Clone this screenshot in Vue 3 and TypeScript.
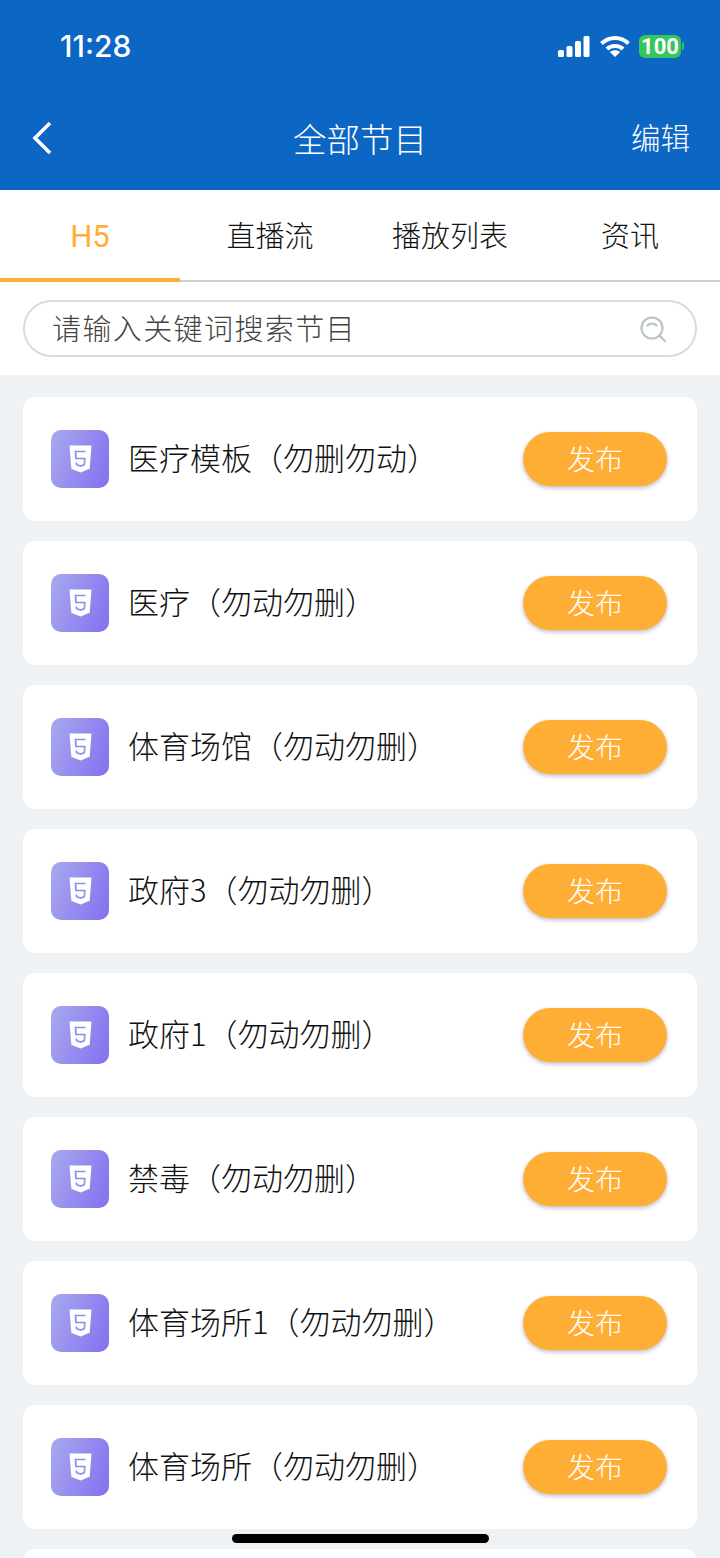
<script setup lang="ts">
const tabs = ['H5', '直播流', '播放列表', '资讯']

const programs = [
  '医疗模板（勿删勿动）',
  '医疗（勿动勿删）',
  '体育场馆（勿动勿删）',
  '政府3（勿动勿删）',
  '政府1（勿动勿删）',
  '禁毒（勿动勿删）',
  '体育场所1（勿动勿删）',
  '体育场所（勿动勿删）',
]
</script>

<template>
  <main class="page">
    <header class="top">
      <div class="status">
        <span class="status__time">11:28</span>
        <div class="status__icons">
          <svg class="status__bars" width="32" height="21" viewBox="0 0 32 21" fill="#fff">
            <rect x="0" y="14" width="6" height="7" rx="1.5" />
            <rect x="8.5" y="10" width="6" height="11" rx="1.5" />
            <rect x="17" y="5" width="6" height="16" rx="1.5" />
            <rect x="25.5" y="0" width="6" height="21" rx="1.5" />
          </svg>
          <svg width="30" height="22" viewBox="0 0 30 22" fill="none" stroke="#fff" stroke-width="4">
            <path d="M1.500 8.500C9.200 1 20.800 1 28.500 8.500" />
            <path d="M7 14C11.200 10 18.800 10 23 14" />
            <path d="M15 22L9.800 17C12.800 14.600 17.200 14.600 20.200 17Z" fill="#fff" stroke="none" />
          </svg>
          <div class="battery"><span class="battery__level">100</span><i class="battery__cap"></i></div>
        </div>
      </div>
      <div class="nav">
        <svg class="nav__back" width="24" height="34" viewBox="0 0 24 34" fill="none" stroke="#fff" stroke-width="3.600">
          <path d="M20 2L5 17L20 32" />
        </svg>
        <h1 class="nav__title">全部节目</h1>
        <span class="nav__edit">编辑</span>
      </div>
    </header>

    <nav class="tabs">
      <div v-for="(tab, i) in tabs" :key="tab" class="tabs__item" :class="{ 'tabs__item--active': i === 0 }">
        {{ tab }}
      </div>
    </nav>

    <section class="search">
      <div class="search__box">
        <span class="search__hint">请输入关键词搜索节目</span>
        <svg width="28" height="28" viewBox="0 0 28 28" fill="none" stroke="#b9c4c4" stroke-width="2.200">
          <circle cx="13" cy="13" r="10.500" />
          <path d="M20.500 20.500L26 26" stroke-linecap="round" />
          <path d="M8.500 10.500C10.500 7.800 15.500 7.800 17.500 10.500" stroke-linecap="round" />
        </svg>
      </div>
    </section>

    <section class="list">
      <article v-for="name in programs" :key="name" class="card">
        <div class="card__icon">
          <svg width="23" height="28" viewBox="0 0 23 28">
            <path fill="#fff" d="M0.500 0.500H22.500L20.700 23.800L11.500 27.500L2.300 23.800Z" />
            <path
              fill="none"
              stroke="#928cf0"
              stroke-width="1.700"
              d="M16.500 6.500H6.500L7 13.500H15.800L15.300 19.700L11.500 21L7.700 19.700L7.500 17.500"
            />
          </svg>
        </div>
        <span class="card__name">{{ name }}</span>
        <button class="card__btn" type="button">发布</button>
      </article>
      <article class="card"></article>
    </section>

    <div class="home-bar"></div>
  </main>
</template>

<style>
html,
body {
  margin: 0;
  height: 1558px;
  overflow: hidden;
}
</style>

<style scoped>
.page {
  position: relative;
  height: 1558px;
  overflow: hidden;
  background: #eff2f5;
  font-family: 'Noto Sans CJK SC', Roboto, sans-serif;
}

.top {
  height: 190px;
  background: #0c66c4;
  color: #fff;
}

.status {
  display: flex;
  justify-content: space-between;
  align-items: center;
  height: 92px;
  padding: 0 36px 0 60px;
}

.status__time {
  font-family: Inter, sans-serif;
  font-size: 30px;
  font-weight: 500;
}

.status__icons {
  display: flex;
  align-items: center;
  gap: 9px;
}

.status__bars {
  margin-right: 1px;
}

.battery {
  display: flex;
  align-items: center;
  gap: 1px;
}

.battery__level {
  display: block;
  width: 42px;
  height: 23px;
  border-radius: 6px;
  background: #34c759;
  color: #fff;
  font-family: Roboto, sans-serif;
  font-size: 22px;
  font-weight: 700;
  line-height: 23px;
  text-align: center;
}

.battery__cap {
  width: 2px;
  height: 8px;
  border-radius: 0 2px 2px 0;
  background: #34c759;
}

.nav {
  display: grid;
  grid-template-columns: 1fr auto 1fr;
  align-items: center;
  height: 92px;
  padding: 0 30px 2px;
  box-sizing: border-box;
}

.nav__back {
  width: 24px;
  margin-top: 2px;
}

.nav__title {
  margin: 0;
  font-size: 33.500px;
  font-weight: 300;
}

.nav__edit {
  justify-self: end;
  font-size: 29.500px;
  font-weight: 300;
  padding-bottom: 2px;
}

.tabs {
  display: grid;
  grid-template-columns: repeat(4, 1fr);
  height: 92px;
  box-sizing: border-box;
  border-bottom: 2px solid #d3ced3;
  background: #fff;
}

.tabs__item {
  display: flex;
  align-items: center;
  justify-content: center;
  height: 92px;
  box-sizing: border-box;
  padding-bottom: 4px;
  color: #111;
  font-size: 29px;
  font-weight: 300;
}

.tabs__item--active {
  padding: 4px 0 0;
  border-bottom: 4px solid #ffae35;
  color: #ffae35;
  font-family: Roboto, sans-serif;
  font-size: 31px;
  font-weight: 400;
}

.search {
  height: 93px;
  box-sizing: border-box;
  padding: 18px 23px 0;
  background: #fff;
}

.search__box {
  display: flex;
  align-items: center;
  justify-content: space-between;
  height: 57px;
  box-sizing: border-box;
  padding: 0 28px 0 27px;
  border: 2px solid #d8dcdc;
  border-radius: 29px;
}

.search__hint {
  padding-bottom: 4px;
  color: #444;
  font-size: 29px;
  font-weight: 300;
  letter-spacing: 1.400px;
}

.list {
  display: flex;
  flex-direction: column;
  gap: 19.500px;
  padding: 21.500px 23px 0;
}

.card {
  display: flex;
  flex: none;
  align-items: center;
  height: 124.500px;
  box-sizing: border-box;
  padding: 0 30px 0 28px;
  border-radius: 12px;
  background: #fff;
}

.card__icon {
  display: flex;
  flex: none;
  align-items: center;
  justify-content: center;
  width: 58px;
  height: 58px;
  border-radius: 10px;
  background: linear-gradient(110deg, #a9a9ef, #8270ef);
}

.card__name {
  flex: 1;
  margin-left: 19px;
  padding-bottom: 4px;
  color: #111;
  font-size: 31px;
  font-weight: 300;
}

.card__btn {
  flex: none;
  width: 144px;
  height: 54px;
  padding: 0 0 2px;
  border: none;
  border-radius: 27px;
  background: #ffae35;
  box-shadow: 0 2px 4px rgba(70, 70, 70, 0.35);
  color: #fff;
  font-family: inherit;
  font-size: 28px;
  font-weight: 300;
}

.home-bar {
  position: absolute;
  left: 232px;
  bottom: 15px;
  width: 257px;
  height: 9px;
  border-radius: 5px;
  background: #000;
}
</style>
